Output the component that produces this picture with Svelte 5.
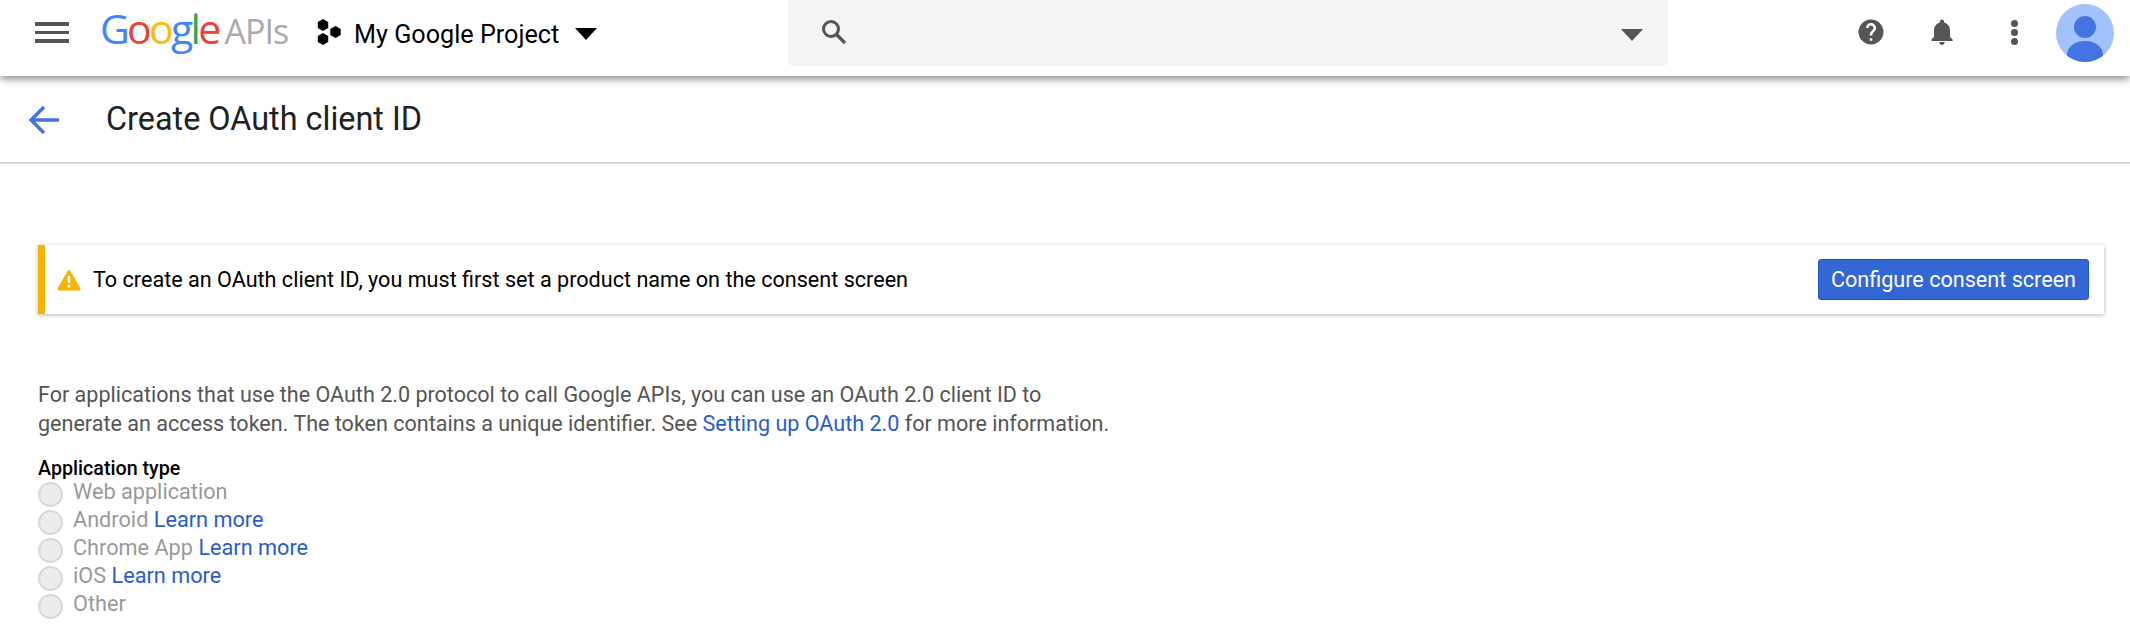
<script>
  const appTypes = [
    { label: "Web application", learn: false },
    { label: "Android", learn: true },
    { label: "Chrome App", learn: true },
    { label: "iOS", learn: true },
    { label: "Other", learn: false }
  ];
</script>

<div class="page">
  <header class="topbar">
    <button class="menu" aria-label="Menu">
      <span></span><span></span><span></span>
    </button>
    <div class="logo">
      <span class="g-blue">G</span><span class="g-red">o</span><span class="g-yellow">o</span><span class="g-blue">g</span><span class="g-green">l</span><span class="g-red">e</span>
      <span class="apis">APIs</span>
    </div>
    <div class="project">
      <svg width="26" height="26" viewBox="0 0 26 26">
        <path fill="#000" d="M6 0l5.200 3v6L6 12 .8 9V3zM6 14l5.200 3v6L6 26 .8 23v-6zM18.500 7l5.200 3v6l-5.200 3-5.200-3v-6z" />
      </svg>
      <span class="project-name">My Google Project</span>
      <span class="caret"></span>
    </div>
    <div class="search">
      <svg class="search-icon" width="28" height="28" viewBox="0 0 28 28">
        <circle cx="11" cy="11" r="7.500" fill="none" stroke="#555" stroke-width="3" />
        <path d="M16.500 16.500L25 25" stroke="#555" stroke-width="3.400" />
      </svg>
      <span class="caret small"></span>
    </div>
    <div class="actions">
      <svg class="help" width="28" height="28" viewBox="0 0 24 24">
        <path fill="#555" d="M12 1.300a10.700 10.700 0 1 0 0 21.400 10.700 10.700 0 0 0 0-21.400zm1.100 18.200h-2.200v-2.200h2.200zm2.200-8.300l-1 1c-.8.800-1.200 1.400-1.200 2.900h-2.200v-.6c0-1.200.4-2.200 1.200-3l1.300-1.400c.4-.4.700-.9.700-1.500a2.100 2.100 0 0 0-4.300 0H7.700a4.300 4.300 0 0 1 8.600 0c0 1-.4 1.900-1 2.600z" />
      </svg>
      <svg class="bell" width="24" height="28" viewBox="0 0 24 28">
        <path fill="#555" d="M12 1.500c-1.200 0-2 .9-2 2v.9C6.300 5.300 4 8.500 4 12.500v6.500l-2.600 2.600V23h21.200v-1.400L20 19v-6.500c0-4-2.300-7.200-6-8.100v-.9c0-1.100-.8-2-2-2zM9.300 24c0 1.500 1.200 3 2.700 3s2.700-1.500 2.700-3z" />
      </svg>
      <span class="dots"><i></i><i></i><i></i></span>
      <svg class="avatar" width="58" height="58" viewBox="0 0 58 58">
        <defs><clipPath id="av"><circle cx="29" cy="29" r="29" /></clipPath></defs>
        <circle cx="29" cy="29" r="29" fill="#a1c2fa" />
        <g clip-path="url(#av)">
          <circle cx="29" cy="23" r="11" fill="#4374e0" />
          <ellipse cx="29" cy="51" rx="18" ry="14" fill="#4374e0" />
        </g>
      </svg>
    </div>
  </header>

  <div class="subbar">
    <svg class="back" width="31" height="30" viewBox="0 0 31 30">
      <path d="M31 15H3M16 2L3 15l13 13" fill="none" stroke="#4374e0" stroke-width="3.400" />
    </svg>
    <h1>Create OAuth client ID</h1>
  </div>

  <main>
    <div class="alert">
      <svg class="warn" width="24" height="22" viewBox="0 0 24 22">
        <path fill="#f4b400" stroke="#f4b400" stroke-width="3" stroke-linejoin="round" d="M12 2.500L2 20h20z" />
        <path fill="#fff" d="M10.700 7h2.600v7h-2.600zM10.700 15.800h2.600v2.600h-2.600z" />
      </svg>
      <span class="alert-text">To create an OAuth client ID, you must first set a product name on the consent screen</span>
      <button class="primary">Configure consent screen</button>
    </div>

    <p class="intro">
      For applications that use the OAuth 2.0 protocol to call Google APIs, you can use an OAuth 2.0 client ID to<br />
      generate an access token. The token contains a unique identifier. See <a href="#setup">Setting up OAuth 2.0</a> for more information.
    </p>

    <div class="field-label">Application type</div>
    <div class="types">
      {#each appTypes as t}
        <label class="type">
          <span class="radio"></span>
          <span>{t.label}{#if t.learn}{" "}<a href="#learn">Learn more</a>{/if}</span>
        </label>
      {/each}
    </div>
  </main>
</div>

<style>
  :global(body) {
    margin: 0;
    background: #fff;
    font-family: Roboto, "Liberation Sans", sans-serif;
  }

  .page {
    width: 2130px;
    height: 634px;
    overflow: hidden;
  }

  .topbar {
    height: 76px;
    display: flex;
    align-items: flex-start;
    background: #fff;
    box-shadow: 0 2px 9px rgba(0, 0, 0, 0.55);
    position: relative;
  }

  .menu {
    display: flex;
    flex-direction: column;
    gap: 5px;
    width: 34px;
    margin: 22px 0 0 35px;
    padding: 0;
    border: none;
    background: none;
  }

  .menu span {
    display: block;
    height: 3.500px;
    background: #555;
  }

  .logo {
    margin: 1px 0 0 31px;
    width: 217px;
    font-family: "Open Sans", sans-serif;
    font-size: 41px;
    line-height: 54px;
    letter-spacing: -2.700px;
    white-space: nowrap;
  }

  .g-blue { color: #4285f4; }
  .g-red { color: #ea4335; }
  .g-yellow { color: #fbbc05; }
  .g-green { color: #34a853; }

  .apis {
    color: #aaa;
    font-size: 34px;
    letter-spacing: -1px;
    margin-left: -2px;
  }

  .project {
    display: flex;
    align-items: center;
    margin-top: 19px;
    height: 26px;
    width: 471px;
  }

  .project-name {
    margin-left: 11px;
    font-size: 25.200px;
    color: #000;
    white-space: nowrap;
    position: relative;
    top: 2px;
  }

  .caret {
    width: 0;
    height: 0;
    border-left: 11px solid transparent;
    border-right: 11px solid transparent;
    border-top: 12px solid #000;
    margin-left: 16px;
    position: relative;
    top: 2px;
  }

  .search {
    width: 880px;
    height: 66px;
    background: #f4f4f4;
    border-radius: 0 0 5px 5px;
    display: flex;
    align-items: center;
    justify-content: space-between;
    padding: 0 25px 0 32px;
    box-sizing: border-box;
  }

  .search-icon {
    margin-bottom: 2px;
  }

  .caret.small {
    border-top-color: #555;
    margin: 0;
  }

  .actions {
    flex: 1;
    display: flex;
    align-items: center;
    height: 58px;
    margin-top: 4px;
    position: relative;
  }

  .help { margin-left: 189px; margin-bottom: 2px; }
  .bell { margin-left: 45px; margin-bottom: 2px; }

  .dots {
    display: flex;
    flex-direction: column;
    gap: 2px;
    margin-left: 57px;
    margin-bottom: 2px;
  }

  .dots i {
    width: 7px;
    height: 7px;
    border-radius: 50%;
    background: #555;
  }

  .avatar { margin-left: 38px; }

  .subbar {
    height: 86px;
    display: flex;
    align-items: center;
    border-bottom: 2px solid #d8d8d8;
  }

  .back { margin: 2px 0 0 28px; }

  h1 {
    margin: 0 0 0 47px;
    font-size: 32.400px;
    font-weight: 400;
    color: #212121;
  }

  main {
    padding: 81px 24px 0 38px;
  }

  .alert {
    display: flex;
    align-items: center;
    height: 69px;
    box-sizing: border-box;
    background: #fff;
    border-left: 7px solid #f4b400;
    box-shadow: 0 1px 4px rgba(0, 0, 0, 0.3);
    padding-right: 15px;
    margin-right: 2px;
  }

  .warn { margin-left: 12px; }

  .alert-text {
    margin-left: 12px;
    flex: 1;
    font-size: 21.600px;
    color: #000;
  }

  .primary {
    width: 271px;
    height: 41px;
    padding: 0;
    background: #3367d6;
    border: 1px solid #1c56c9;
    border-radius: 3px;
    color: #fff;
    font-family: inherit;
    font-size: 21.600px;
  }

  .intro {
    margin: 67px 0 0;
    font-size: 21.550px;
    line-height: 28.500px;
    color: #555;
  }

  a {
    color: #2a5cc9;
    text-decoration: none;
  }

  .field-label {
    margin-top: 21px;
    font-size: 19.700px;
    font-weight: 500;
    line-height: 20px;
    color: #000;
  }

  .types {
    display: flex;
    flex-direction: column;
  }

  .type {
    display: flex;
    align-items: center;
    gap: 10px;
    height: 28px;
    font-size: 21.700px;
    color: #999;
  }

  .type > span:last-child {
    position: relative;
    top: -2px;
  }

  .radio {
    width: 25px;
    height: 25px;
    box-sizing: border-box;
    border-radius: 50%;
    background: #ececec;
    border: 2px solid #d8d8d8;
    position: relative;
    top: 1px;
  }
</style>
